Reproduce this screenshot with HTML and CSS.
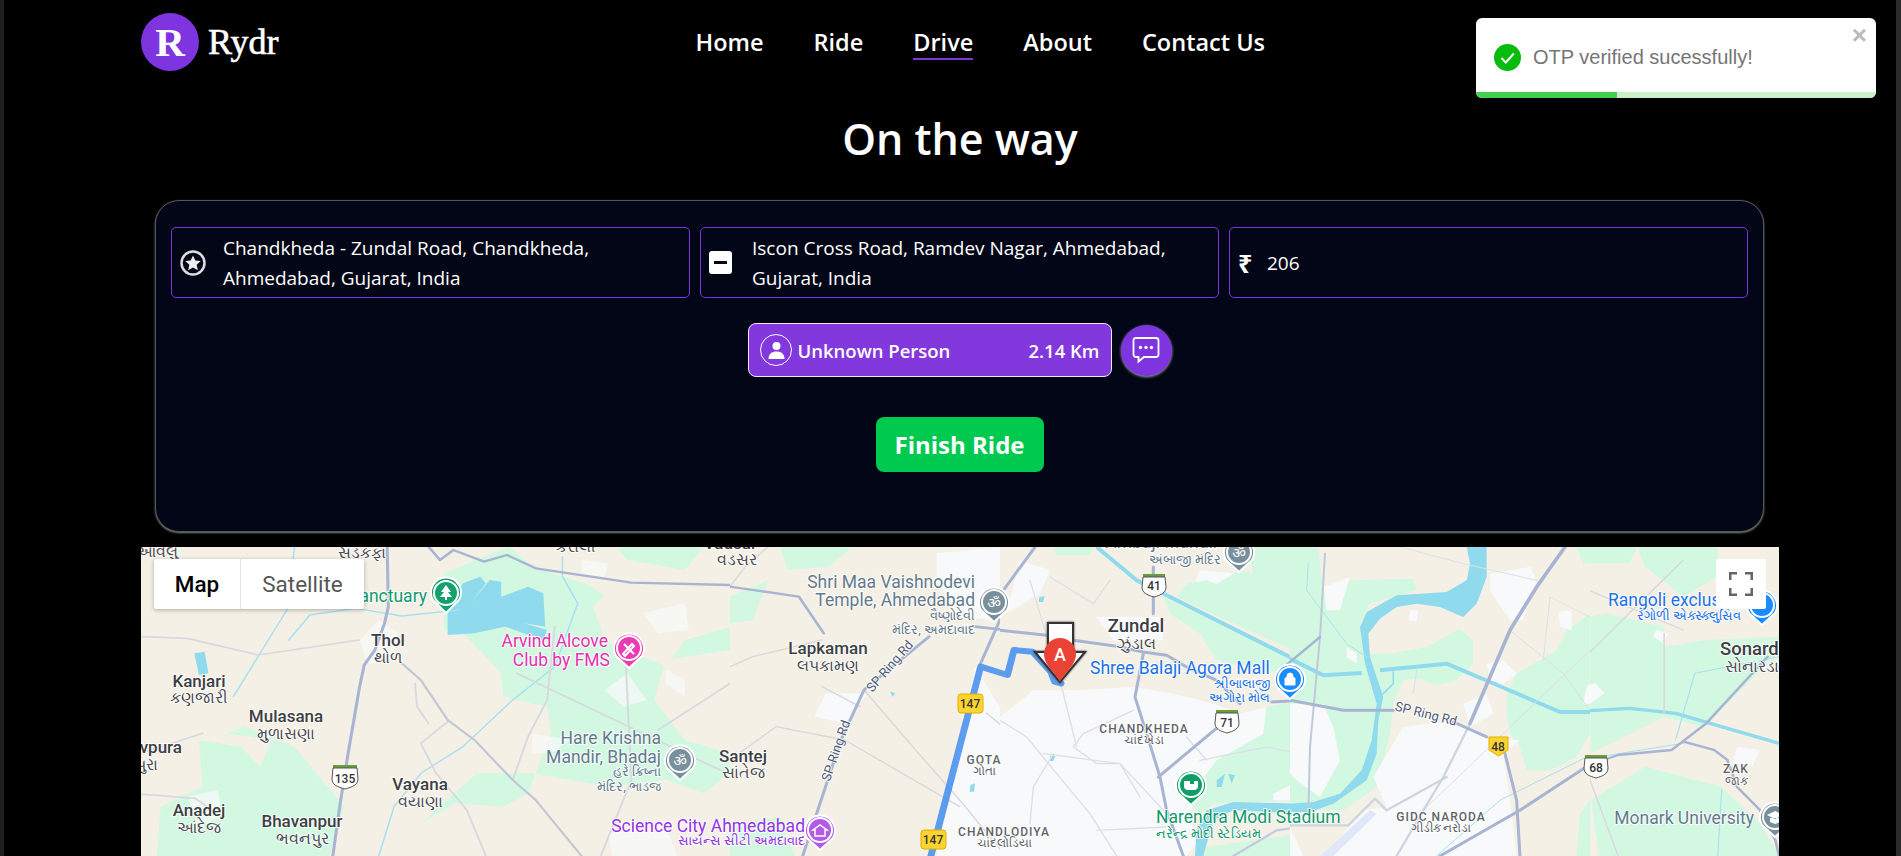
FILE: index.html
```html
<!DOCTYPE html>
<html lang="en">
<head>
  <meta charset="UTF-8">
  <title>Rydr</title>
  <link rel="stylesheet" href="styles.css">
</head>
<body>
  <div class="edge edge-left"></div>
  <div class="edge edge-right"></div>

  <div class="page">
    <header class="topbar">
      <a class="brand" href="#">
        <span class="brand-mark">R</span>
        <span class="brand-name">Rydr</span>
      </a>
      <nav class="nav">
        <a href="#">Home</a>
        <a href="#">Ride</a>
        <a href="#" class="active">Drive</a>
        <a href="#">About</a>
        <a href="#">Contact Us</a>
      </nav>
      <div class="topbar-spacer"></div>
    </header>

    <h1 class="title">On the way</h1>

    <section class="ride-card">
      <div class="fields">
        <div class="field">
          <svg class="field-icon" viewBox="0 0 26 26"><circle cx="13" cy="13" r="11.5" fill="none" stroke="#ddd" stroke-width="2.500"/><path d="M13 5.500l2.300 5 5.400.6-4 3.700 1.100 5.400-4.800-2.700-4.800 2.700 1.100-5.400-4-3.700 5.400-.6z" fill="#eee"/></svg>
          <p>Chandkheda - Zundal Road, Chandkheda, Ahmedabad, Gujarat, India</p>
        </div>
        <div class="field">
          <svg class="field-icon square" viewBox="0 0 23 23"><rect width="23" height="23" rx="3" fill="#fff"/><rect x="5" y="10" width="13" height="3" fill="#020617"/></svg>
          <p>Iscon Cross Road, Ramdev Nagar, Ahmedabad, Gujarat, India</p>
        </div>
        <div class="field">
          <span class="rupee">₹</span>
          <p>206</p>
        </div>
      </div>

      <div class="driver-row">
        <div class="driver">
          <svg class="avatar" viewBox="0 0 32 32"><circle cx="16" cy="16" r="15.500" fill="none" stroke="#fff"/><circle cx="16.500" cy="12" r="4" fill="#fff"/><path d="M8.500 25c0-5 3-7.500 8-7.500s8 2.500 8 7.500z" fill="#fff"/></svg>
          <span class="driver-name">Unknown Person</span>
          <span class="driver-dist">2.14 Km</span>
        </div>
        <button class="chat-btn">
          <svg viewBox="0 0 28 28" width="28" height="28"><path d="M4 2h20a2.500 2.500 0 0 1 2.500 2.500v14a2.500 2.500 0 0 1-2.500 2.500H12l-5.500 4.500V21H4a2.500 2.500 0 0 1-2.500-2.500v-14A2.500 2.500 0 0 1 4 2z" fill="none" stroke="#fff" stroke-width="1.800"/><circle cx="8.500" cy="11.500" r="1.700" fill="#fff"/><circle cx="14" cy="11.500" r="1.700" fill="#fff"/><circle cx="19.500" cy="11.500" r="1.700" fill="#fff"/></svg>
        </button>
      </div>

      <button class="finish-btn">Finish Ride</button>
    </section>

    <div class="map">
      <svg class="map-canvas" viewBox="141 547 1638 309" width="1638" height="309">
        <defs>
          <clipPath id="clip-left"><rect x="141" y="547" width="589" height="309"/></clipPath>
          <clipPath id="clip-mid"><rect x="730" y="547" width="270" height="309"/></clipPath>
          <clipPath id="clip-centre"><rect x="1000" y="547" width="290" height="309"/></clipPath>
          <clipPath id="clip-east"><rect x="1290" y="547" width="300" height="309"/></clipPath>
          <clipPath id="clip-right"><rect x="1590" y="547" width="189" height="309"/></clipPath>
        </defs>
        <rect x="141" y="547" width="1638" height="309" fill="#f5f0e6"/>

        <!-- west -->
        <g clip-path="url(#clip-left)">
        <g transform="translate(130 540) scale(.3827 .3333)">
          <g class="land">
            <g fill="#d3f8e2">
              <path d="M990 20 1060 85 1190 130 1240 165 1210 200 1240 300 1400 380 1450 300 1568 260V700L1500 760 1400 720 1250 740 1050 700 905 700 760 850 600 860 540 900 530 948H70L80 800 190 740 180 600 290 620 340 680 370 600 250 580 300 560 430 620 560 800 640 948 850 790 975 800 1040 760 1100 580 1090 500 975 470 970 400 880 290 820 270 820 100Z"/>
              <path d="M1270 20H1500L1450 90 1300 60Z"/>
            </g>
            <g fill="#f5f0e6">
              <path d="M1250 180 1568 150V260L1450 300 1300 260Z"/>
              <path d="M1400 360 1568 330V640L1450 600 1370 480Z"/>
              <path d="M520 948 560 800 760 850 850 790 640 948Z"/>
            </g>
            <g fill="#f8f9fa" fill-opacity=".7">
              <path d="M600 300 650 240 700 280 680 370 620 370Z"/>
              <path d="M1240 450 1300 400 1350 480 1290 500Z"/>
              <path d="M1400 390 1450 420 1450 470 1400 430Z"/>
              <path d="M1050 580 1150 600 1100 640 1050 640Z"/>
              <path d="M1250 880 1400 860 1430 948H1260Z"/>
              <path d="M150 770 230 750 240 830 180 860Z"/>
              <path d="M1180 60 1250 70 1240 110 1180 100Z"/>
              <path d="M1340 220 1450 190 1460 270 1380 280Z"/>
            </g>
            <g fill="#90daee">
              <path d="M830 210 870 130 915 110 930 130 890 190 940 120 970 125 970 170 1040 140 1080 160 1085 260 1030 250 1090 270 1080 300 980 260 900 280 830 285Z"/>
              <path d="M168 340 195 335 205 400 180 405Z"/>
            </g>
          </g>
          <g fill="none" stroke-linejoin="round" stroke-linecap="round">
            <path stroke="#a8e0f0" stroke-width="4" d="M270 470 410 210 430 20M415 300 470 225 590 205 710 228 860 210M1130 50 1130 110 1170 190 1110 380 1000 480 870 620 760 700 690 800 650 948"/>
            <path stroke="#d6d9de" stroke-width="5" d="M30 290 150 295 335 345 600 300M780 550 750 500 745 430M830 545 760 610 800 700 880 810 930 948M1110 260 1090 480 1040 590 1000 720M1296 380 1310 720 1230 948M1010 400 1560 700M0 760 170 775 240 830M1568 430 1380 570M30 640 190 580"/>
            <path stroke="#c2c7d2" stroke-width="6" d="M710 370 760 420 830 540 900 600 1000 720 1060 780 1180 948"/>
            <path stroke="#a7b4d2" stroke-width="8" d="M672 20 675 200 665 250 640 330 612 375 600 440 570 640 548 800 530 948"/>
            <path stroke="#a7b4d2" stroke-width="7" d="M780 20 810 60 845 30 925 65 985 45 1060 85 1310 128 1568 135"/>
          </g>
        </g>
        </g>

        <!-- middle -->
        <g clip-path="url(#clip-mid)">
        <g transform="translate(730 540) scale(.3827 .3333)">
          <g class="land">
            <g fill="#d3f8e2">
              <path d="M0 170 100 120 60 240 0 250Z"/>
              <path d="M130 20H320L260 80 150 90Z"/>
              <path d="M0 860 130 830 170 948H0Z"/>
            </g>
            <g fill="#f8f9fa">
              <path d="M640 380 720 530 800 440V948H540Z"/>
              <path d="M250 460 360 460 300 550 220 530Z"/>
              <path d="M540 40 720 20 690 240 600 230 540 120Z"/>
            </g>
            <path fill="#f5f0e6" d="M700 350 800 370 780 480 720 520Z"/>
            <path fill="#90daee" d="M418 455 432 460 425 470ZM628 735 640 730 638 755 626 755Z"/>
          </g>
          <g fill="none" stroke-linejoin="round" stroke-linecap="round">
            <path stroke="#d6d9de" stroke-width="4" d="M0 660 120 560 300 600 600 800M350 450 500 650 600 780 720 948M240 440 340 500M670 520 780 620M100 20 40 80 0 140M0 380 60 350 240 300"/>
            <path stroke="#a7b4d2" stroke-width="7" d="M0 140 180 170 245 280"/>
            <path stroke="#a7b4d2" stroke-width="8" d="M790 20 655 370M640 260 800 280M520 290 350 450 290 600 190 948"/>
          </g>
        </g>
        </g>

        <!-- centre, round the start marker -->
        <g clip-path="url(#clip-centre)">
        <g transform="translate(1000 547) scale(.3333)">
          <g class="land">
            <g fill="#f8f9fa">
              <path d="M0 510 100 430 240 430 400 420 520 440 640 470 720 500 800 480 790 560 680 680 620 740 560 800 600 880 560 927H0Z"/>
              <path d="M60 40 150 70 120 140 20 200Z"/>
              <path d="M290 210 480 210 490 280 340 280Z"/>
              <path d="M600 70 720 80 700 140 620 170 580 120Z"/>
            </g>
            <g fill="#d3f8e2">
              <path d="M160 0H280L270 25 170 25Z"/>
              <path d="M490 150 900 340V372L810 372 650 340 600 260 510 200Z"/>
              <path d="M530 150 560 110 620 100 650 110 720 70 760 80 740 0H900V320L560 165Z"/>
              <path d="M800 480 900 460V760L640 770 600 800 560 760 650 640 790 560Z"/>
              <path d="M610 927 620 900 900 860V927Z"/>
            </g>
            <path fill="#f8f9fa" d="M820 740 900 700V760H820Z"/>
            <path fill="#90daee" d="M620 790 700 765 900 770V800L700 790 640 820 610 927H585L590 850ZM650 700 675 680 665 720 650 720ZM685 680 705 685 695 710ZM118 150 134 148 130 165 116 165ZM150 628 166 625 160 642 150 642Z"/>
          </g>
          <g fill="none" stroke-linejoin="round" stroke-linecap="round">
            <path stroke="#90daee" stroke-width="12" stroke-linecap="butt" d="M290 0 410 100 900 345"/>
            <path stroke="#dcdfe5" stroke-width="4" d="M0 520 80 570 170 680 270 800 350 927M220 600 250 560 400 490M220 600 290 650 360 650 420 750M160 620 100 720 90 830M130 620 360 650 500 800M600 640 800 600 900 620M560 570 620 640M90 100 180 400 230 600M150 90 280 170 330 100M290 850 500 840"/>
            <path stroke="#a7b4d2" stroke-width="9" d="M0 250 140 265 220 280 350 298 430 315 500 325 560 360 650 400 720 470M460 60V200M430 320 405 450 440 560 480 690 500 790 550 927M660 535 475 690M815 465 900 460M900 320 830 380M105 0 10 130"/>
            <path stroke="#c4cbdc" stroke-width="7" d="M700 927 830 850 900 840"/>
          </g>
        </g>
        </g>

        <!-- east, river and ring road -->
        <g clip-path="url(#clip-east)">
        <g transform="translate(1290 547) scale(.3333)">
          <g class="land">
            <g fill="#d3f8e2">
              <path d="M0 0H85L95 90 120 190 180 100 370 95 380 130 240 170 210 230 220 320 300 320 410 300 510 245 550 280 550 350 500 400 440 415 380 395 340 400 310 470 300 560 280 640 260 720 160 790H0V460Z"/>
              <path d="M650 440 680 380 800 310 830 250 900 200V560L860 630 780 670 710 670 690 600 660 560 650 500Z"/>
              <path d="M860 0H900V50L880 50Z"/>
              <path d="M860 927 870 800 900 760V927Z"/>
            </g>
            <g fill="#f8f9fa">
              <path d="M0 470H100L130 540 150 640 90 750 20 700 0 680Z"/>
              <path d="M250 690 340 540 500 520 600 570 690 580 640 620 660 760 680 927H100L220 790 290 780Z"/>
              <path d="M0 840 40 927H0Z"/>
              <path d="M600 80 720 60 740 100 700 220 660 220 600 130Z"/>
              <path d="M590 350 640 340 680 380 640 410 600 400Z"/>
              <path d="M360 190 385 190 380 225 355 220Z"/>
              <path d="M805 195 845 190 845 250 810 240Z"/>
              <path d="M520 470 590 440 610 500 540 540Z"/>
              <path d="M100 120 180 90 150 190 110 190Z"/>
              <path d="M170 300 200 320 200 350 170 330Z"/>
              <path d="M890 420 900 410V470H880Z"/>
            </g>
            <path fill="#90daee" d="M530 0H590V90L560 170 520 210 450 180 380 170 320 180 270 215 235 260 240 330 280 450 265 520 260 620 230 700 130 770 60 795H0V770L70 765 150 740 215 670 245 580 260 470 225 350 210 240 230 195 320 145 470 135 530 100 540 50Z"/>
            <path fill="#dfe7f8" d="M90 927 240 790 260 800 130 927Z"/>
          </g>
          <g fill="none" stroke-linejoin="round" stroke-linecap="round">
            <path stroke="#90daee" stroke-width="12" stroke-linecap="butt" d="M0 335 100 385 215 378M270 370 470 350 600 405 810 495H900"/>
            <path stroke="#90daee" stroke-width="5" d="M310 375 310 410 280 440"/>
            <path stroke="#a8e0f0" stroke-width="3" d="M440 927 630 760 890 630M55 50 50 130 170 290 230 330"/>
            <path stroke="#dcdfe5" stroke-width="3" d="M330 0 520 50 740 100M900 310 640 560 400 790M660 250 820 380 900 490M780 150 900 210M380 370 370 440M780 150 760 340"/>
            <path stroke="#cdd5e2" stroke-width="7" d="M540 530 460 690 400 790 320 927M470 690 290 790 255 755 175 835H0"/>
            <path stroke="#c0c8da" stroke-width="6" d="M105 20 90 270 60 600 55 800"/>
            <path stroke="#a7b4d2" stroke-width="7" d="M0 345 90 270"/>
            <path stroke="#a7b4d2" stroke-width="11" d="M825 0 740 120 660 250 540 530"/>
            <path stroke="#a7b4d2" stroke-width="9" d="M0 460 160 490H310M490 525 590 570M645 620 680 760 690 927M450 927 690 790 880 665"/>
          </g>
        </g>
        </g>

        <!-- far east -->
        <g clip-path="url(#clip-right)">
        <g transform="translate(1300 540) scale(.3833 .3333)">
          <g class="land">
            <g fill="#d3f8e2">
              <path d="M758 230V640L950 530 1050 560 1250 340V290L1060 300 950 320 950 260 800 220Z"/>
              <path d="M750 21H880L860 70 750 70Z"/>
              <path d="M880 21H1090V110L1000 170 900 80Z"/>
              <path d="M780 948 760 780 900 680 1100 740 1200 850 1250 948Z"/>
            </g>
            <path fill="#f8f9fa" d="M740 440 770 430 795 460 745 500ZM930 270 960 280 950 310 920 290ZM1140 620 1200 630 1180 680 1130 670Z"/>
          </g>
          <g fill="none" stroke-linejoin="round" stroke-linecap="round">
            <path stroke="#90daee" stroke-width="10" stroke-linecap="butt" d="M680 517 860 505 980 520 1250 610"/>
            <path stroke="#a8e0f0" stroke-width="3" d="M730 660 1000 610M1250 350 1030 400 980 600M1100 750 1090 948"/>
            <path stroke="#d6d9de" stroke-width="4" d="M1000 60 700 400M710 130 1000 270M950 280 950 520M735 520 750 700 830 948"/>
            <path stroke="#a7b4d2" stroke-width="7" d="M740 680 830 645 970 630 1060 550 1220 350M1000 605 1080 630 1115 660 1140 740 1200 810 1240 900 1250 948"/>
          </g>
        </g>
        </g>

        <!-- route -->
        <g transform="translate(730 540) scale(.3827 .3333)">
          <path class="route" d="M525 948 655 380 725 405 742 330 790 335 810 360 838 395 848 425 865 430"/>
        </g>

        <!-- road numbers -->
        <g class="shield">
          <path class="cap" d="M333 765h24v4h-24z"/><path d="M333 768h24l1 11c0 6-6 8-13 10-7-2-13-4-13-10z"/><text x="345" y="783">135</text>
          <path class="cap" d="M1143 574h22v4h-22z"/><path d="M1143 577h22l1 10c0 6-5 8-12 10-7-2-12-4-12-10z"/><text x="1154" y="590">41</text>
          <path class="cap" d="M1216 710h22v4h-22z"/><path d="M1216 713h22l1 10c0 6-5 8-12 10-7-2-12-4-12-10z"/><text x="1227" y="727">71</text>
          <path class="cap" d="M1585 755h22v4h-22z"/><path d="M1585 758h22l1 10c0 6-5 8-12 10-7-2-12-4-12-10z"/><text x="1596" y="772">68</text>
        </g>
        <g class="shield yellow">
          <rect x="958" y="694" width="25" height="19" rx="3"/><text x="970" y="708">147</text>
          <rect x="921" y="830" width="25" height="19" rx="3"/><text x="933" y="844">147</text>
          <path d="M1489 737h19v13l-9.500 6-9.500-6z"/><text x="1498" y="751">48</text>
        </g>

        <!-- places -->
        <g class="pl">
          <text x="178" y="557" class="gu end">આવલુ</text>
          <text x="362" y="558" class="gu">સડકફા</text>
          <text x="576" y="552" class="gu">કરોલી</text>
          <text x="388" y="646" class="nm">Thol</text>
          <text x="388" y="663" class="gu">થોળ</text>
          <text x="199" y="687" class="nm">Kanjari</text>
          <text x="199" y="703" class="gu">કણજારી</text>
          <text x="286" y="722" class="nm">Mulasana</text>
          <text x="286" y="739" class="gu">મુળાસણા</text>
          <text x="182" y="753" class="nm end">Navpura</text>
          <text x="158" y="770" class="gu end">નવપુરા</text>
          <text x="420" y="790" class="nm">Vayana</text>
          <text x="420" y="807" class="gu">વયાણા</text>
          <text x="199" y="816" class="nm">Anadej</text>
          <text x="199" y="833" class="gu">આંદેજ</text>
          <text x="302" y="827" class="nm">Bhavanpur</text>
          <text x="302" y="844" class="gu">ભવનપુર</text>
          <text x="743" y="762" class="nm">Santej</text>
          <text x="743" y="778" class="gu">સાંતેજ</text>
          <text x="757" y="549" class="nm end">Vadsar</text>
          <text x="757" y="565" class="gu end">વડસર</text>
          <text x="828" y="654" class="nm">Lapkaman</text>
          <text x="828" y="671" class="gu">લપકામણ</text>
          <text x="1136" y="632" class="nm lg">Zundal</text>
          <text x="1136" y="649" class="gu">ઝુંડાલ</text>
          <text x="1720" y="655" class="nm lg start">Sonarda</text>
          <text x="1725" y="672" class="gu start">સોનારડા</text>
          <text x="1144" y="733" class="area">CHANDKHEDA</text>
          <text x="1144" y="744" class="area-gu">ચાંદખેડા</text>
          <text x="984" y="764" class="area">GOTA</text>
          <text x="984" y="775" class="area-gu">ગોતા</text>
          <text x="1004" y="836" class="area">CHANDLODIYA</text>
          <text x="1004" y="847" class="area-gu">ચાંદલોડિયા</text>
          <text x="1441" y="821" class="area">GIDC NARODA</text>
          <text x="1441" y="832" class="area-gu">ગીડીક નરોડા</text>
          <text x="1736" y="773" class="area">ZAK</text>
          <text x="1736" y="785" class="area-gu">જાક</text>

          <text class="road" transform="translate(893 669) rotate(-49)">SP Ring Rd</text>
          <text class="road" transform="translate(840 752) rotate(-71)">SP Ring Rd</text>
          <text class="road" transform="translate(1425 718) rotate(14)">SP Ring Rd</text>

          <g class="poi green">
            <text x="427" y="602" class="end">Sanctuary</text>
            <text x="1156" y="823" class="start">Narendra Modi Stadium</text>
            <text x="1156" y="838" class="sm start">નરેન્દ્ર મોદી સ્ટેડિયમ</text>
          </g>
          <g class="poi pink">
            <text x="608" y="647" class="end">Arvind Alcove</text>
            <text x="610" y="666" class="end">Club by FMS</text>
          </g>
          <g class="poi slate">
            <text x="661" y="744" class="end">Hare Krishna</text>
            <text x="661" y="763" class="end">Mandir, Bhadaj</text>
            <text x="661" y="776" class="sm end">હરે ક્રિષ્ના</text>
            <text x="661" y="791" class="sm end">મંદિર, ભાડજ</text>
            <text x="975" y="588" class="end">Shri Maa Vaishnodevi</text>
            <text x="975" y="606" class="end">Temple, Ahmedabad</text>
            <text x="975" y="620" class="sm end">વૈષ્ણોદેવી</text>
            <text x="975" y="634" class="sm end">મંદિર, અમદાવાદ</text>
            <text x="1162" y="548">Ambaji Mandir</text>
            <text x="1185" y="564" class="sm">અંબાજી મંદિર</text>
            <text x="1754" y="824" class="end">Monark University</text>
          </g>
          <g class="poi purple">
            <text x="805" y="832" class="end">Science City Ahmedabad</text>
            <text x="805" y="845" class="sm end">સાયન્સ સીટી અમદાવાદ</text>
          </g>
          <g class="poi blue">
            <text x="1090" y="674" class="start">Shree Balaji Agora Mall</text>
            <text x="1270" y="688" class="sm end">શ્રીબાલાજી</text>
            <text x="1270" y="702" class="sm end">અગોરા મોલ</text>
            <text x="1608" y="606" class="start">Rangoli exclusive</text>
            <text x="1741" y="620" class="sm end">રંગોળી એક્સ્ક્લુસિવ</text>
          </g>
        </g>

        <!-- poi pins -->
        <g class="pin" fill="#15a06f"><path d="M433 600a15 15 0 1 1 26 0l-13 13z"/><circle cx="446" cy="593" r="12"/></g>
        <path d="M446 585l-5 7h3l-4 5h12l-4-5h3zM445 597h2v3h-2z" fill="#fff"/>
        <g class="pin" fill="#ea3bb4"><path d="M616 656a15 15 0 1 1 26 0l-13 12z"/><circle cx="629" cy="648" r="12"/></g>
        <path d="M623 654l9-10 2 2-9 10zM624 644l10 10" stroke="#fff" stroke-width="2" fill="none"/>
        <g class="pin" fill="#78909c"><path d="M667 768a15 15 0 1 1 26 0l-13 12z"/><circle cx="680" cy="760" r="12"/></g>
        <text x="680" y="766" class="om">ॐ</text>
        <g class="pin" fill="#78909c"><path d="M981 610a15 15 0 1 1 26 0l-13 12z"/><circle cx="994" cy="602" r="12"/></g>
        <text x="994" y="608" class="om">ॐ</text>
        <g class="pin" fill="#78909c"><path d="M1226 560a15 15 0 1 1 26 0l-13 12z"/><circle cx="1239" cy="552" r="12"/></g>
        <text x="1239" y="558" class="om">ॐ</text>
        <g class="pin" fill="#b15be8"><path d="M807 838a15 15 0 1 1 26 0l-13 12z"/><circle cx="820" cy="830" r="12"/></g>
        <path d="M813 830l7-5 7 5h-2v6h-10v-6z" fill="none" stroke="#fff" stroke-width="1.500"/>
        <g class="pin" fill="#1a8cff"><path d="M1277 687a15 15 0 1 1 26 0l-13 12z"/><circle cx="1290" cy="679" r="12"/></g>
        <path d="M1285 678h10v7h-10zM1287 678v-2a3 3 0 0 1 6 0v2" fill="#fff" stroke="#fff"/>
        <g class="pin" fill="#0f9d68"><path d="M1178 793a15 15 0 1 1 26 0l-13 12z"/><circle cx="1191" cy="785" r="12"/></g>
        <path d="M1184 781h6v3h4v-3h4v5a4 4 0 0 1-4 4h-6a4 4 0 0 1-4-4z" fill="#fff"/>
        <g class="pin" fill="#1a8cff"><path d="M1749 613a15 15 0 1 1 26 0l-13 12z"/><circle cx="1762" cy="605" r="12"/></g>
        <g class="pin" fill="#78909c"><path d="M1762 825a15 15 0 1 1 26 0l-13 12z"/><circle cx="1775" cy="817" r="12"/></g>
        <path d="M1767 815l8-4 8 4-8 4zM1770 818v4l5 2 5-2v-4" fill="#fff"/>

        <!-- start marker -->
        <path class="marker-arrow" d="M1048 623h25v29h12l-25 30-25-30h13z"/>
        <path d="M1060 682c-3-8-16-16-16-28a16 16 0 0 1 32 0c0 12-13 20-16 28z" fill="#ea4335"/>
        <text x="1060" y="661" class="marker-letter">A</text>
      </svg>

      <div class="map-type">
        <button class="map-type-btn current">Map</button>
        <button class="map-type-btn">Satellite</button>
      </div>
      <button class="fullscreen-btn">
        <svg viewBox="0 0 24 24" width="24" height="24"><path d="M1 8V1h7M16 1h7v7M23 16v7h-7M8 23H1v-7" fill="none" stroke="#666" stroke-width="3"/></svg>
      </button>
    </div>
  </div>

  <div class="toast">
    <svg class="toast-check" viewBox="0 0 27 27"><circle cx="13.500" cy="13.500" r="13.500" fill="#07bc0c"/><path d="M7.500 14l4.300 4.500 8-9" fill="none" stroke="#fff" stroke-width="2"/></svg>
    <span class="toast-text">OTP verified sucessfully!</span>
    <span class="toast-close">×</span>
    <div class="toast-progress"><div class="toast-progress-bar"></div></div>
  </div>
</body>
</html>
```

FILE: styles.css
```css
* {
  box-sizing: border-box;
}

html, body {
  margin: 0;
  height: 856px;
  overflow: hidden;
}

body {
  background-color: #000;
  color: #fff;
  font-family: 'Open Sans', 'Noto Sans', sans-serif;
}

/* dark window edges */
.edge {
  position: fixed;
  top: 0;
  bottom: 0;
}

.edge-left {
  left: 0;
  width: 4px;
  background-color: #1f1f1f;
}

.edge-right {
  right: 0;
  width: 5px;
  background-color: #2b2b2b;
}

.page {
  width: 1638px;
  margin-left: 141px;
}

/* header */
.topbar {
  display: flex;
  justify-content: space-between;
  align-items: center;
  padding-top: 13px;
  height: 71px;
}

.brand {
  display: flex;
  align-items: center;
  gap: 9px;
  color: #fff;
  text-decoration: none;
}

.brand-mark {
  width: 58px;
  height: 58px;
  border-radius: 50%;
  background-color: #7e35e0;
  display: flex;
  align-items: center;
  justify-content: center;
  font-family: 'Liberation Serif', serif;
  font-size: 41px;
  font-weight: bold;
}

.brand-name {
  font-family: 'Liberation Serif', serif;
  font-size: 36px;
  -webkit-text-stroke: .6px #fff;
}

.nav {
  display: flex;
  gap: 50px;
  margin-top: 1px;
}

.nav a {
  color: #fff;
  text-decoration: none;
  font-size: 23.500px;
  font-weight: 600;
  border-bottom: 2px solid transparent;
}

.nav a.active {
  border-bottom-color: #7e35e0;
}

.topbar-spacer {
  width: 97px;
}

.title {
  margin: 30px 0 0;
  height: 99px;
  text-align: center;
  font-size: 43px;
  font-weight: 600;
  line-height: 76px;
}

/* ride card */
.ride-card {
  width: 1609px;
  height: 332px;
  margin: 0 0 0 14px;
  padding: 26px 15px 0;
  background-color: #020617;
  border: 1px solid #555;
  border-radius: 24px;
  box-shadow: 0 1px 2px rgba(255, 255, 255, .5);
  display: flex;
  flex-direction: column;
  align-items: center;
}

.fields {
  display: grid;
  grid-template-columns: repeat(3, 1fr);
  gap: 10px;
  width: 100%;
}

.field {
  height: 71px;
  display: flex;
  align-items: center;
  padding: 0 8px;
  border: 1px solid #7e35e0;
  border-radius: 5px;
  font-size: 19px;
  line-height: 30px;
}

.field p {
  margin: 0;
  padding-left: 17px;
  padding-right: 40px;
}

.field-icon {
  width: 26px;
  height: 26px;
  flex: none;
}

.field-icon.square {
  width: 23px;
  height: 23px;
  margin-right: 3px;
}

.rupee {
  width: 12px;
  font-size: 25px;
  font-weight: bold;
}

.driver-row {
  display: flex;
  align-items: center;
  gap: 9px;
  margin-top: 25px;
}

.driver {
  width: 364px;
  height: 54px;
  padding: 0 11px;
  display: flex;
  align-items: center;
  background-color: #8338de;
  border: 1px solid #f1e8ff;
  border-radius: 8px;
  font-size: 18.500px;
  font-weight: 600;
}

.avatar {
  width: 32px;
  height: 32px;
  margin-right: 6px;
}

.driver-dist {
  margin-left: auto;
}

.chat-btn {
  width: 51px;
  height: 51px;
  padding: 0;
  display: flex;
  align-items: center;
  justify-content: center;
  background-color: #7e35e0;
  border: none;
  border-radius: 50%;
  box-shadow: 0 1px 3px #aaa;
}

.finish-btn {
  margin-top: 40px;
  width: 168px;
  height: 55px;
  background-color: #00c950;
  color: #fff;
  border: none;
  border-radius: 8px;
  font-family: inherit;
  font-size: 24px;
  font-weight: 700;
}

/* map */
.map {
  position: relative;
  margin-top: 15px;
  height: 309px;
  overflow: hidden;
}

.map-canvas {
  display: block;
}

.map-canvas text {
  font-family: Roboto, 'Noto Sans', sans-serif;
}

.land {
  filter: blur(1.500px);
}

.route {
  fill: none;
  stroke: #4590f0;
  stroke-opacity: .88;
  stroke-width: 18px;
  stroke-linejoin: round;
  stroke-linecap: round;
}

.pl text {
  text-anchor: middle;
  paint-order: stroke;
  stroke: #fff;
  stroke-width: 2px;
  stroke-opacity: .85;
}

.pl .nm {
  font-size: 17px;
  font-weight: 500;
  fill: #3c4043;
}

.pl .lg {
  font-size: 18.500px;
}

.pl .gu {
  font-size: 16px;
  fill: #4a4d52;
}

.pl .area {
  font-size: 12px;
  font-weight: 500;
  letter-spacing: 1px;
  fill: #5f6368;
}

.pl .area-gu {
  font-size: 12px;
  font-weight: 500;
  fill: #5f6368;
}

.pl .road {
  font-size: 13px;
  fill: #4d5a78;
}

.pl .end {
  text-anchor: end;
}

.pl .start {
  text-anchor: start;
}

.poi text {
  font-size: 17.500px;
}

.poi .sm {
  font-size: 13px;
}

.poi.green text {
  fill: #129a6e;
}

.poi.pink text {
  fill: #e92fb0;
}

.poi.slate text {
  fill: #637a8c;
}

.poi.purple text {
  fill: #9334e6;
}

.poi.blue text {
  fill: #1a73e8;
}

.pin {
  stroke: #fff;
  stroke-width: 2px;
}

.om {
  font-size: 15px;
  fill: #fff;
  text-anchor: middle;
}

.shield path {
  fill: #fff;
  stroke: #555;
  stroke-width: 1px;
}

.shield .cap {
  fill: #6a9c3e;
  stroke: none;
}

.shield text {
  font-size: 12px;
  font-weight: 500;
  fill: #333;
  text-anchor: middle;
}

.shield.yellow rect, .shield.yellow path {
  fill: #fdd32f;
  stroke: #e0b000;
}

.marker-arrow {
  fill: #fff;
  stroke: #333;
  stroke-width: 2px;
  filter: drop-shadow(0 0 1px #333);
}

.marker-letter {
  font-size: 18px;
  font-weight: 500;
  fill: #fff;
  text-anchor: middle;
}

.map-type {
  position: absolute;
  top: 12px;
  left: 13px;
  display: flex;
  background-color: #fff;
  border-radius: 2px;
  box-shadow: 0 1px 4px rgba(0, 0, 0, .3);
}

.map-type-btn {
  width: 123px;
  height: 50px;
  padding: 0;
  background: none;
  border: none;
  font-family: Roboto, sans-serif;
  font-size: 22.500px;
  color: #565656;
}

.map-type-btn.current {
  width: 87px;
  border-right: 1px solid #e6e6e6;
  color: #000;
  font-weight: 500;
}

.fullscreen-btn {
  position: absolute;
  top: 12px;
  right: 13px;
  width: 50px;
  height: 50px;
  padding: 0;
  display: flex;
  align-items: center;
  justify-content: center;
  background-color: #fff;
  border: none;
  border-radius: 2px;
}

/* toast */
.toast {
  position: fixed;
  top: 18px;
  left: 1476px;
  width: 400px;
  height: 80px;
  display: flex;
  align-items: center;
  padding: 0 0 2px 18px;
  background-color: #fff;
  border-radius: 6px;
  overflow: hidden;
  font-family: 'Liberation Sans', Arial, sans-serif;
}

.toast-check {
  width: 27px;
  height: 27px;
  margin-right: 12px;
}

.toast-text {
  font-size: 20px;
  color: #757575;
}

.toast-close {
  position: absolute;
  top: 2px;
  right: 9px;
  font-size: 26px;
  font-weight: bold;
  color: #bbb;
}

.toast-progress {
  position: absolute;
  left: 0;
  right: 0;
  bottom: 0;
  height: 6px;
  background-color: #c9f0c9;
}

.toast-progress-bar {
  width: 141px;
  height: 100%;
  background-color: #43cf4d;
}
```
